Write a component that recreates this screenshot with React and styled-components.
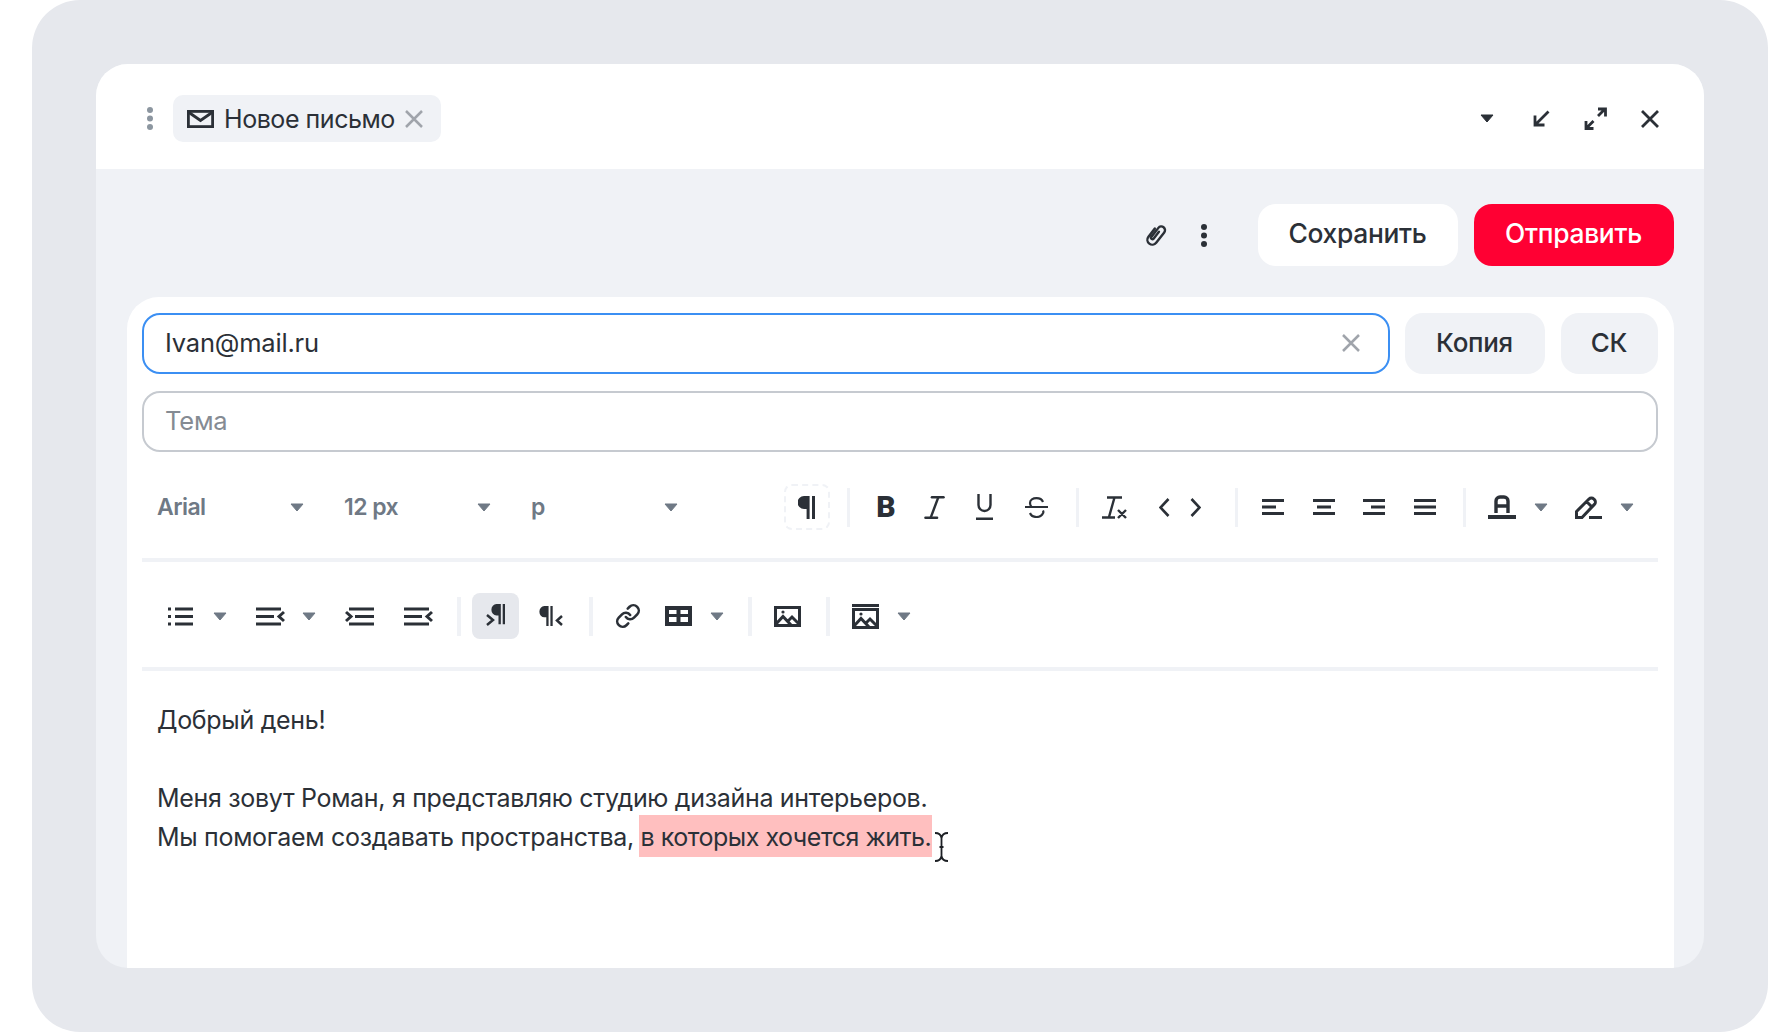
import React from "react"
import styled, { createGlobalStyle } from "styled-components"
import { Italic, Link } from "lucide-react"

const dark = "#2b3037"
const FONT = `Inter, "Noto Sans", sans-serif`

const GlobalStyle = createGlobalStyle`
  html, body {
    margin: 0;
    background: #fff;
    font-family: ${FONT};
    color: ${dark};
  }
  * { box-sizing: border-box; }
`

const Backdrop = styled.div`
  width: 1736px;
  height: 1032px;
  margin-left: 32px;
  padding: 64px;
  background: #e6e8ed;
  border-radius: 48px;
`

const Window = styled.div`
  height: 904px;
  display: flex;
  flex-direction: column;
  background: #f0f2f6;
  border-radius: 32px;
  overflow: hidden;
`

const Header = styled.header`
  flex: none;
  height: 105px;
  display: flex;
  align-items: center;
  padding: 4px 42px 0 51px;
  background: #fff;
  svg { display: block; }
`

const Tab = styled.div`
  height: 47px;
  margin-left: 20px;
  padding: 0 18px 0 14px;
  display: flex;
  align-items: center;
  gap: 10px;
  background: #f0f2f6;
  border-radius: 10px;
  font-size: 25px;
  letter-spacing: -0.45px;
  white-space: nowrap;
`

const WindowControls = styled.div`
  margin-left: auto;
  display: flex;
  gap: 30.5px;
`

const ControlBox = styled.div`
  width: 24px;
  height: 24px;
  display: flex;
  align-items: center;
  justify-content: center;
`

const ActionBar = styled.div`
  flex: none;
  display: flex;
  align-items: center;
  justify-content: flex-end;
  padding: 35px 30.5px 31px;
`

const AttachBox = styled.div`
  display: flex;
  margin-right: 34px;
`

const MoreBox = styled.div`
  display: flex;
  margin-right: 51px;
`

const Button = styled.button`
  width: 200px;
  height: 62px;
  margin-left: ${(p) => (p.$primary ? "16px" : "0")};
  padding: 0 0 4px;
  border: none;
  border-radius: 18px;
  background: ${(p) => (p.$primary ? "#ff0033" : "#fff")};
  color: ${(p) => (p.$primary ? "#fff" : dark)};
  font: 500 26.4px ${FONT};
  letter-spacing: -0.3px;
`

const Card = styled.section`
  flex: 1;
  margin: 0 30.5px 0 31px;
  padding: 16px 16px 0 15px;
  background: #fff;
  border-radius: 32px 32px 0 0;
`

const FieldRow = styled.div`
  display: flex;
  gap: 15px;
  margin-bottom: 17px;
`

const Field = styled.div`
  flex: 1;
  height: 61px;
  display: flex;
  align-items: center;
  justify-content: space-between;
  padding: 0 28px 2px 21px;
  border: 2px solid ${(p) => (p.$focused ? "#3b8ff3" : "#c6cad0")};
  border-radius: 18px;
  font-size: 25.5px;
  letter-spacing: -0.2px;
  color: ${(p) => (p.$placeholder ? "#858b93" : dark)};
`

const GhostButton = styled.button`
  width: ${(p) => p.$width}px;
  height: 61px;
  margin-left: ${(p) => p.$ml || 0}px;
  padding: 0 0 2px;
  border: none;
  border-radius: 18px;
  background: #f0f2f6;
  color: ${dark};
  font: 500 26px ${FONT};
  letter-spacing: -0.3px;
`

const ToolRow = styled.div`
  height: 46px;
  display: flex;
  align-items: center;
  margin-top: ${(p) => p.$top}px;
  padding-left: ${(p) => p.$left}px;
`

const Rule = styled.div`
  height: 4px;
  margin-top: 28px;
  background: #f0f2f6;
`

const FontSelect = styled.div`
  width: 147px;
  display: flex;
  align-items: center;
  justify-content: space-between;
  margin-right: 40px;
  font-size: 23px;
  font-weight: 600;
  color: #6f7985;
  letter-spacing: -0.55px;
`

const Tool = styled.div`
  flex: none;
  width: ${(p) => p.$width || 40}px;
  height: 46px;
  margin-left: ${(p) => p.$ml || 0}px;
  display: flex;
  align-items: center;
  justify-content: center;
  color: ${dark};
  border-radius: 8px;
  background: ${(p) => (p.$active ? "#e6e8ed" : "transparent")};
  border: ${(p) => (p.$dashed ? "2px dashed #f0f2f6" : "none")};
`

const BoldMark = styled.span`
  font: 900 30px Roboto, sans-serif;
  line-height: 1;
`

const CaretBox = styled.div`
  flex: none;
  display: flex;
  margin-left: ${(p) => p.$ml || 0}px;
`

const Separator = styled.div`
  flex: none;
  width: ${(p) => p.$width || 4}px;
  height: 39px;
  margin-left: ${(p) => p.$ml}px;
  background: #f0f2f6;
`

const Editor = styled.div`
  padding: 30px 15px 0;
  font-size: 25px;
  line-height: 39px;
  letter-spacing: -0.31px;
  color: ${dark};
  white-space: nowrap;
`

const Line = styled.div`
  min-height: 39px;
`

const Selected = styled.span`
  position: relative;
  margin-left: -2px;
  padding: 7px 1px 5px 2px;
  background: #ffbfbf;
  letter-spacing: -0.48px;
`

const TextCursor = styled.svg`
  position: absolute;
  left: 100%;
  top: 17px;
  margin-left: 2px;
`

const Caret = ({ color = "#6f7985" }) => (
  <svg width="14" height="9" viewBox="0 0 14 9">
    <path d="M1 1h12L7 8z" fill={color} stroke={color} strokeLinejoin="round" />
  </svg>
)

const CaretTool = ({ ml }) => (
  <CaretBox $ml={ml}>
    <Caret />
  </CaretBox>
)

const Stroke = ({ w, h, sw = 3, children }) => (
  <svg
    width={w}
    height={h}
    viewBox={`0 0 ${w} ${h}`}
    fill="none"
    stroke="currentColor"
    strokeWidth={sw}
  >
    {children}
  </svg>
)

const CloseIcon = ({ size = 18, sw = 2.5, color = "#a0a4ab" }) => (
  <svg width={size} height={size} viewBox="0 0 18 18" fill="none" stroke={color} strokeWidth={sw}>
    <path d="M1 1l16 16M17 1L1 17" />
  </svg>
)

const MailIcon = () => (
  <Stroke w={27} h={18} sw={2.8}>
    <rect x="1.4" y="1.4" width="24.2" height="15.2" />
    <path d="M2 2.500l11.500 8 11.500-8" />
  </Stroke>
)

const VerticalDots = ({ color }) => (
  <svg width="6" height="23" viewBox="0 0 6 23" fill={color}>
    <circle cx="3" cy="3" r="3" />
    <circle cx="3" cy="11.500" r="3" />
    <circle cx="3" cy="20" r="3" />
  </svg>
)

const MinimizeIcon = () => (
  <svg width="17" height="17" viewBox="0 0 17 17" fill="none" stroke={dark} strokeWidth="2.8">
    <path d="M15.500 1.500L2.500 14.500M2 5.500v9.500h9.500" />
  </svg>
)

const ExpandIcon = () => (
  <svg width="23" height="23" viewBox="0 0 23 23" fill="none" stroke={dark} strokeWidth="2.8">
    <path d="M14 2h7.500v7.500M21 2l-7 7M9.500 21.500H2V14M2.500 21l7-7" />
  </svg>
)

const PaperclipIcon = () => (
  <svg width="22" height="24" viewBox="0 0 19 22" fill="none" stroke={dark} strokeWidth="2.2" strokeLinecap="round">
    <g transform="rotate(38 9.500 11)">
      <path d="M5 7v9.500a4.500 4.500 0 0 0 9 0V4.500a3.400 3.400 0 0 0-6.800 0V15a1.300 1.300 0 0 0 2.600 0V7" />
    </g>
  </svg>
)

const Para = () => (
  <g fill="currentColor" stroke="none">
    <path d="M7 0h5.600v23H9.600V13H7A6.500 6.500 0 0 1 7 0z" />
    <rect x="15" width="3" height="23" />
  </g>
)

const ParaIcon = () => (
  <svg width="18" height="23" viewBox="1 0 18 23">
    <Para />
  </svg>
)

const ParaLeftIcon = () => (
  <svg width="19" height="24" viewBox="0 0 19 24" fill="none" stroke="currentColor">
    <g transform="translate(5 0) scale(.78 .88)">
      <Para />
    </g>
    <path d="M1 11l6 5-6 5" strokeWidth="2.500" />
  </svg>
)

const ParaRightIcon = () => (
  <svg width="24" height="20" viewBox="0 0 24 20" fill="none" stroke="currentColor">
    <g transform="scale(.76 .87)">
      <Para />
    </g>
    <path d="M23 10l-5 4.500 5 4.500" strokeWidth="2.500" />
  </svg>
)

const UnderlineIcon = () => (
  <Stroke w={17} h={26} sw={2.400}>
    <path d="M2.500 0v11a6 6 0 0 0 12 0V0M0 24.800h17" />
  </Stroke>
)

const StrikeIcon = () => (
  <Stroke w={23} h={21} sw={2.200}>
    <path d="M0 10h23M18 5c-1-2.500-3.500-3.800-6.500-3.800C8 1.200 5 3 5 6c0 1.500.5 2.800 1.500 4M18 13.500c.5 1 .5 1.800 0 2.700-1 2.500-3.500 3.800-6.500 3.800s-5.500-1.400-6.500-4" />
  </Stroke>
)

const ClearFormatIcon = () => (
  <Stroke w={26} h={23} sw={2.400}>
    <path d="M5 1.500h15M12.500 1.500L7 21M0 21.500h13M16 14l8 8M24 14l-8 8" />
  </Stroke>
)

const ChevronIcon = ({ right }) => (
  <Stroke w={11} h={19} sw={2.600}>
    <path d={right ? "M1.500 1l8 8.500-8 8.500" : "M9.500 1l-8 8.500 8 8.500"} />
  </Stroke>
)

const AlignIcon = ({ mid }) => (
  <Stroke w={22} h={16} sw={2.800}>
    <path d={`M0 1.500h22${mid}M0 14.500h22`} />
  </Stroke>
)

const ColorIcon = () => (
  <svg width="28" height="24" viewBox="0 0 28 24" fill="none" stroke="currentColor">
    <path d="M8 18V6a4 4 0 0 1 4-4h4a4 4 0 0 1 4 4v12M8 11h12" strokeWidth="3.400" />
    <rect width="28" height="4" y="20" fill="currentColor" stroke="none" />
  </svg>
)

const MarkerIcon = () => (
  <Stroke w={27} h={24} sw={3}>
    <path d="M1.500 22.500v-6L14 4a3.400 3.400 0 0 1 4.800 0l.6.6a3.400 3.400 0 0 1 0 4.800L7 22.500zM11.500 6.500l5.500 5.500" />
    <path d="M14 22.500h13" />
  </Stroke>
)

const ListIcon = () => (
  <Stroke w={25} h={19} sw={3}>
    <path d="M7 2h18M7 9.500h18M7 17h18M0 2h3M0 9.500h3M0 17h3" />
  </Stroke>
)

const IndentIcon = () => (
  <Stroke w={29} h={19} sw={3}>
    <path d="M0 2h25M0 9.500h18M0 17h25M28 5l-5 4.500 5 4.500" />
  </Stroke>
)

const OutdentIcon = () => (
  <Stroke w={29} h={19} sw={3}>
    <path d="M4 2h25M10 9.500h19M4 17h25M1 5l5 4.500L1 14" />
  </Stroke>
)

const TableIcon = () => (
  <svg width="27" height="20" viewBox="0 0 27 20" fill="none">
    <rect width="27" height="20" fill="currentColor" />
    <rect x="4" y="4" width="7.500" height="4" fill="#fff" />
    <rect x="15.500" y="4" width="7.500" height="4" fill="#fff" />
    <rect x="4" y="11" width="7.500" height="5" fill="#fff" />
    <rect x="15.500" y="11" width="7.500" height="5" fill="#fff" />
  </svg>
)

const ImageIcon = () => (
  <Stroke w={27} h={21}>
    <rect x="1.500" y="1.500" width="24" height="18" />
    <path d="M2 18l7-7.500 8 8.500M14 15l4-4 7 7" />
    <circle cx="9" cy="6" r="1.600" fill="currentColor" stroke="none" />
  </Stroke>
)

const ImageBannerIcon = () => (
  <Stroke w={27} h={25}>
    <path d="M0 1.500h27" />
    <rect x="1.500" y="5.500" width="24" height="18" />
    <path d="M2 22l7-7.500 8 8.500M14 19l4-4 7 7" />
    <circle cx="9" cy="10" r="1.600" fill="currentColor" stroke="none" />
  </Stroke>
)

const App = () => {
  return (
    <>
      <GlobalStyle />
      <Backdrop>
        <Window>
          <Header>
            <VerticalDots color="#8c96a0" />
            <Tab>
              <MailIcon />
              <span>Новое письмо</span>
              <CloseIcon />
            </Tab>
            <WindowControls>
              <ControlBox>
                <Caret color={dark} />
              </ControlBox>
              <ControlBox>
                <MinimizeIcon />
              </ControlBox>
              <ControlBox>
                <ExpandIcon />
              </ControlBox>
              <ControlBox>
                <CloseIcon color={dark} sw={2.800} />
              </ControlBox>
            </WindowControls>
          </Header>

          <ActionBar>
            <AttachBox>
              <PaperclipIcon />
            </AttachBox>
            <MoreBox>
              <VerticalDots color={dark} />
            </MoreBox>
            <Button>Сохранить</Button>
            <Button $primary>Отправить</Button>
          </ActionBar>

          <Card>
            <FieldRow>
              <Field $focused>
                Ivan@mail.ru
                <CloseIcon />
              </Field>
              <GhostButton $width={140}>Копия</GhostButton>
              <GhostButton $width={97} $ml={1}>СК</GhostButton>
            </FieldRow>
            <Field $placeholder>Тема</Field>

            <ToolRow $top={32} $left={15}>
              <FontSelect>
                Arial <Caret />
              </FontSelect>
              <FontSelect>
                12 px <Caret />
              </FontSelect>
              <FontSelect>
                p <Caret />
              </FontSelect>
              <Tool $width={46} $ml={66} $dashed>
                <ParaIcon />
              </Tool>
              <Separator $ml={17} $width={3} />
              <Tool $ml={16}>
                <BoldMark>B</BoldMark>
              </Tool>
              <Tool $ml={8}>
                <Italic size={31} strokeWidth={1.900} />
              </Tool>
              <Tool $ml={10}>
                <UnderlineIcon />
              </Tool>
              <Tool $ml={12}>
                <StrikeIcon />
              </Tool>
              <Separator $ml={20} $width={3} />
              <Tool $ml={16}>
                <ClearFormatIcon />
              </Tool>
              <Tool $ml={17} $width={24}>
                <ChevronIcon />
              </Tool>
              <Tool $ml={7} $width={24}>
                <ChevronIcon right />
              </Tool>
              <Separator $ml={28} $width={3} />
              <Tool $ml={15}>
                <AlignIcon mid="M0 8h14" />
              </Tool>
              <Tool $ml={10.500}>
                <AlignIcon mid="M4 8h14" />
              </Tool>
              <Tool $ml={10.500}>
                <AlignIcon mid="M8 8h14" />
              </Tool>
              <Tool $ml={10.500}>
                <AlignIcon mid="M0 8h22" />
              </Tool>
              <Separator $ml={18} $width={3} />
              <Tool $ml={16.500}>
                <ColorIcon />
              </Tool>
              <CaretTool ml={12} />
              <Tool $ml={20}>
                <MarkerIcon />
              </Tool>
              <CaretTool ml={12} />
            </ToolRow>
            <Rule />

            <ToolRow $top={31} $left={18}>
              <Tool>
                <ListIcon />
              </Tool>
              <CaretTool ml={13} />
              <Tool $ml={23}>
                <IndentIcon />
              </Tool>
              <CaretTool ml={12} />
              <Tool $ml={23}>
                <OutdentIcon />
              </Tool>
              <Tool $ml={19}>
                <IndentIcon />
              </Tool>
              <Separator $ml={19} />
              <Tool $ml={11} $width={47} $active>
                <ParaLeftIcon />
              </Tool>
              <Tool $ml={12}>
                <ParaRightIcon />
              </Tool>
              <Separator $ml={18} />
              <Tool $ml={15}>
                <Link size={26} strokeWidth={2.400} />
              </Tool>
              <Tool $ml={10}>
                <TableIcon />
              </Tool>
              <CaretTool ml={12} />
              <Separator $ml={24} />
              <Tool $ml={15}>
                <ImageIcon />
              </Tool>
              <Separator $ml={19} />
              <Tool $ml={15}>
                <ImageBannerIcon />
              </Tool>
              <CaretTool ml={12} />
            </ToolRow>
            <Rule />

            <Editor>
              <Line>Добрый день!</Line>
              <Line />
              <Line>Меня зовут Роман, я представляю студию дизайна интерьеров.</Line>
              <Line>
                Мы помогаем создавать пространства,{" "}
                <Selected>
                  в которых хочется жить.
                  <TextCursor width="15" height="30" viewBox="0 0 15 30" fill="none" stroke="#1c1f24" strokeWidth="1.800">
                    <path d="M1 1c3 0 6 1.500 6.500 5C8 2.500 11 1 14 1M7.500 6v18M1 29c3 0 6-1.500 6.500-5 .5 3.500 3.500 5 6.500 5M5.500 15h4" />
                  </TextCursor>
                </Selected>
              </Line>
            </Editor>
          </Card>
        </Window>
      </Backdrop>
    </>
  )
}

export default App
